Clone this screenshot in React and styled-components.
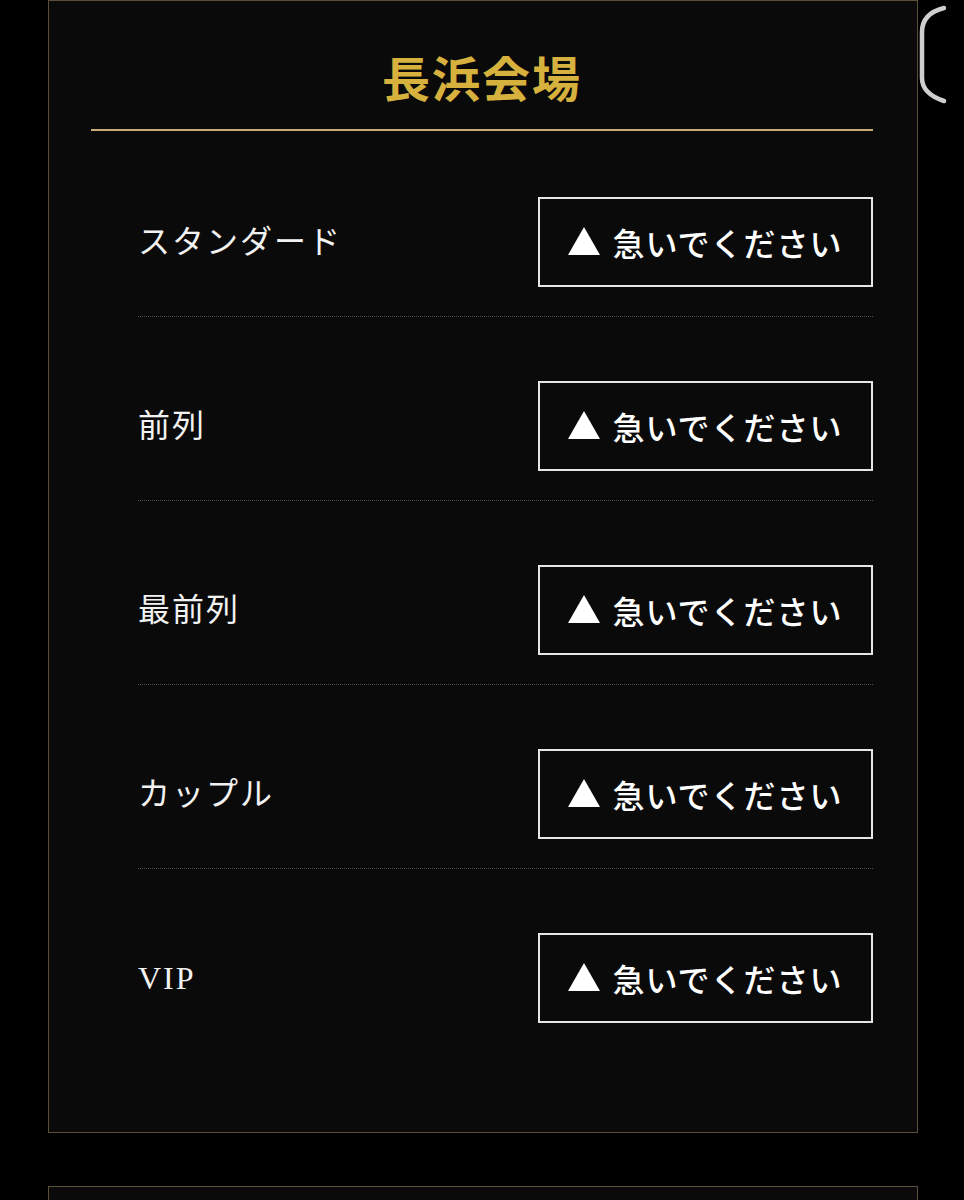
import React from "react";
import styled, { createGlobalStyle } from "styled-components";

const GlobalStyle = createGlobalStyle`
  html, body {
    margin: 0;
    padding: 0;
    background: #000;
  }
  body {
    font-family: "Liberation Serif", "Noto Sans CJK JP", serif;
    color: #fff;
  }
`;

const Page = styled.div`
  position: relative;
  display: flex;
  flex-direction: column;
  gap: 53px;
  padding: 0 46px 0 48px;
  min-height: 1200px;
  overflow: hidden;
`;

const Venue = styled.section`
  background: #0a0a0a;
  border: 1px solid #5a5039;
  padding: ${(p) => (p.$empty ? "60px 44px 60px 42px" : "51px 44px 80px 42px")};
`;

const Heading = styled.h2`
  margin: 0;
  padding-bottom: 29px;
  border-bottom: 2px solid #c9ab7c;
  text-align: center;
  font-family: "Noto Sans CJK JP", sans-serif;
  font-weight: 700;
  font-size: 48px;
  line-height: 1;
  letter-spacing: 2px;
  color: #d6b13e;
`;

const SeatList = styled.ul`
  list-style: none;
  margin: 0 0 0 47px;
  padding: 0;
`;

const SeatRow = styled.li`
  display: flex;
  align-items: center;
  justify-content: space-between;
  padding: 64px 0 29px;
  border-bottom: 1px dotted #4d4d4d;
  &:first-child {
    padding-top: 66px;
  }
  &:last-child {
    border-bottom: none;
  }
`;

const SeatName = styled.span`
  font-family: "Liberation Serif", "Noto Sans CJK JP", serif;
  font-weight: 400;
  font-size: 32px;
  line-height: 1;
  letter-spacing: 2px;
  color: #f2f2f2;
`;

const StatusButton = styled.button`
  display: flex;
  align-items: center;
  justify-content: center;
  gap: 12px;
  width: 335px;
  height: 90px;
  box-sizing: border-box;
  background: transparent;
  border: 2px solid #e6e6e6;
  color: #fff;
  font-family: "Noto Sans CJK JP", sans-serif;
  font-weight: 500;
  font-size: 32px;
  line-height: 1;
  letter-spacing: 1px;
  padding: 0;
  cursor: pointer;
`;

const Triangle = styled.span`
  display: inline-block;
  width: 0;
  height: 0;
  border-left: 16px solid transparent;
  border-right: 16px solid transparent;
  border-bottom: 28px solid #fff;
  margin-top: -2px;
`;

const EdgeHandle = styled.svg`
  position: absolute;
  top: 4px;
  right: 10px;
  width: 40px;
  height: 100px;
`;

const seats = ["スタンダード", "前列", "最前列", "カップル", "VIP"];

export default function App() {
  return (
    <>
      <GlobalStyle />
      <Page>
        <Venue>
          <Heading>長浜会場</Heading>
          <SeatList>
            {seats.map((name) => (
              <SeatRow key={name}>
                <SeatName>{name}</SeatName>
                <StatusButton type="button">
                  <Triangle />
                  急いでください
                </StatusButton>
              </SeatRow>
            ))}
          </SeatList>
        </Venue>
        <Venue $empty />
        <EdgeHandle viewBox="0 0 40 100" fill="none">
          <path
            d="M30 4 C18 7 8 14 8 28 L8 74 C8 86 18 93 30 97"
            stroke="#cfcfcf"
            strokeWidth="4.5"
            strokeLinecap="round"
          />
        </EdgeHandle>
      </Page>
    </>
  );
}
